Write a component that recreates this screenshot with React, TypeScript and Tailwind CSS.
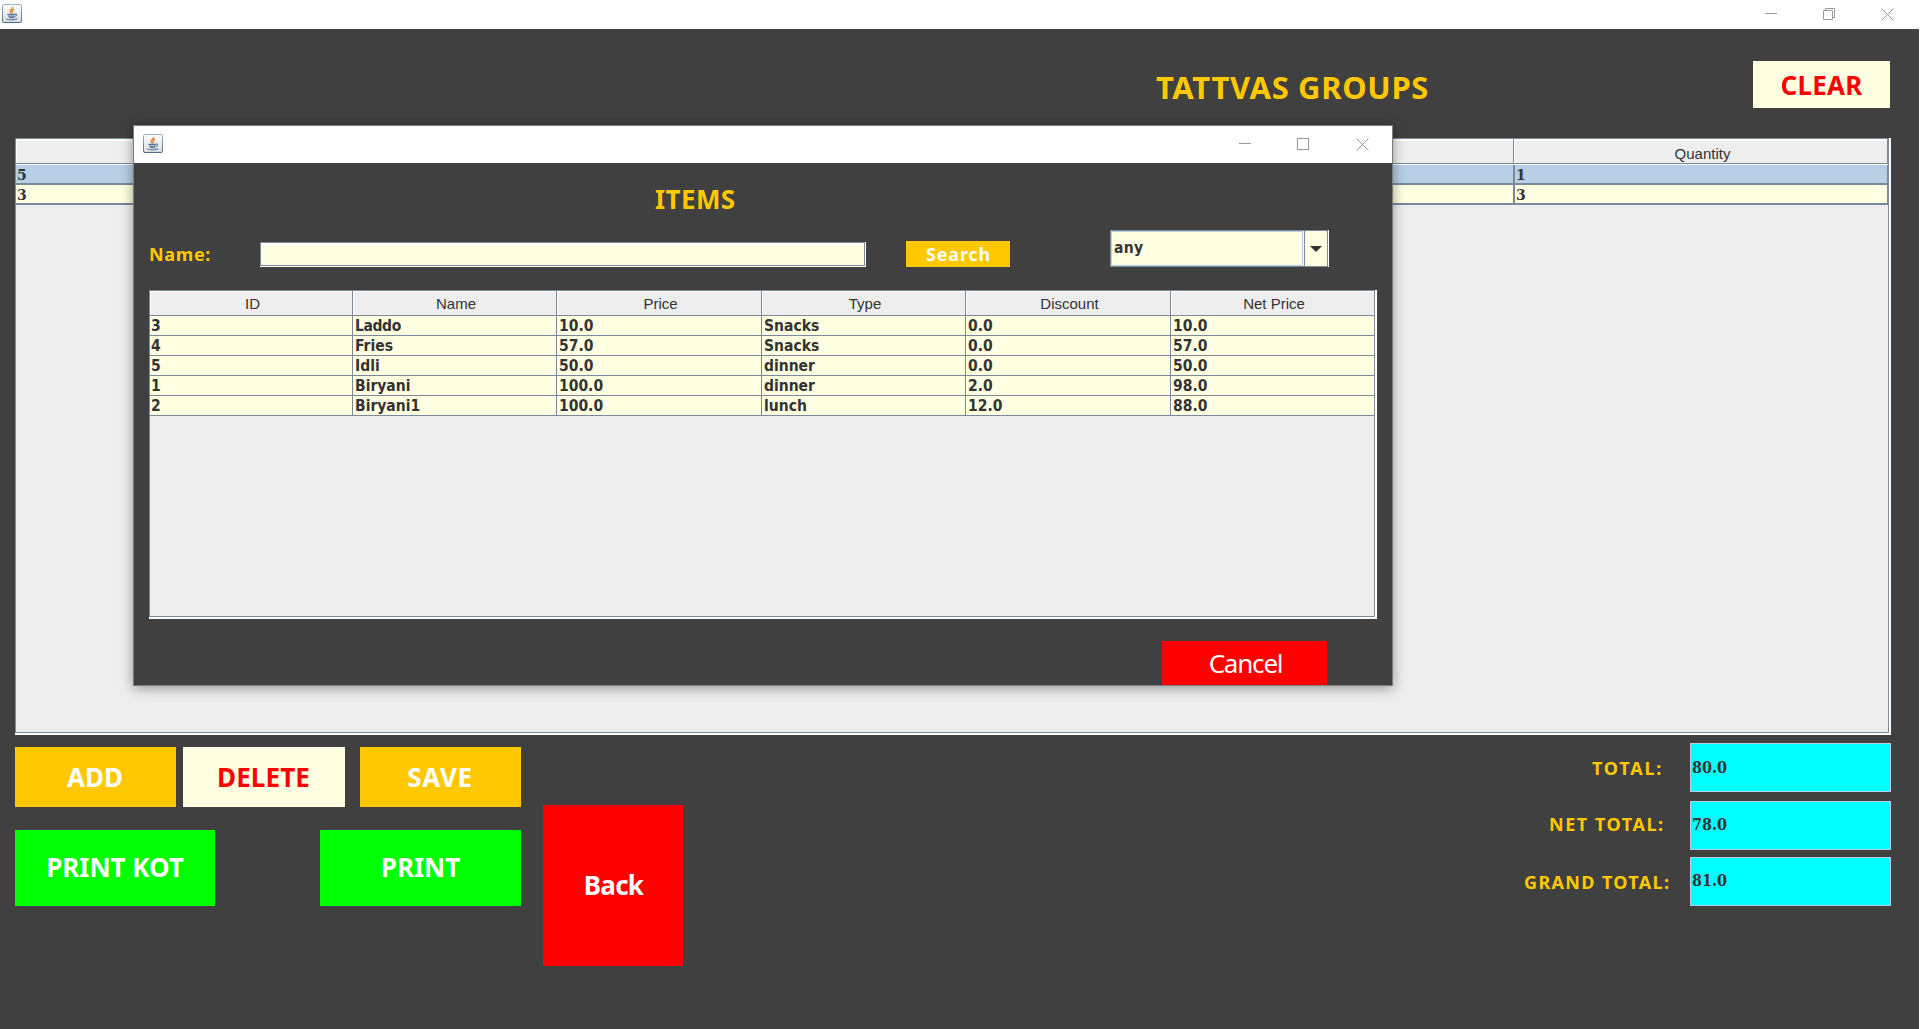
import React from "react";

type LabelProps = { cls?: string; children: React.ReactNode };

const Label = ({ cls = "", children }: LabelProps) => (
  <span className={`inline-block whitespace-nowrap ${cls}`}>{children}</span>
);

const JavaIcon = () => (
  <svg width="20" height="20" viewBox="0 0 20 20" className="shrink-0">
    <defs>
      <linearGradient id="tile" x1="0" y1="0" x2="0" y2="1">
        <stop offset="0" stopColor="#ffffff" />
        <stop offset="1" stopColor="#d9dcdf" />
      </linearGradient>
      <linearGradient id="edge" x1="0" y1="0" x2="0" y2="1">
        <stop offset="0" stopColor="#9db3c6" />
        <stop offset="1" stopColor="#4f6d86" />
      </linearGradient>
    </defs>
    <rect x="0.5" y="0.5" width="19" height="18" rx="1.5" fill="url(#tile)" stroke="url(#edge)" />
    <path d="M10.6 3c.8 1.800-2.800 2.600-2.500 4.300.2.900 1 1.200 1.300 1.900M12 5.300c-1.700.8-2.200 1.300-1.800 2.200.3.700.3 1.100-.4 1.700" fill="none" stroke="#e8883a" strokeWidth="1.500" />
    <path d="M5.200 10.300h8M6 12.100h6.500M7 13.700h5" fill="none" stroke="#5b7b97" strokeWidth="1.300" />
    <path d="M13 10c2.500-.4 2.200 2-.7 2.600M4 14.700c1.500 1.600 9.500 1.400 11.200-.2" fill="none" stroke="#6d8aa4" strokeWidth="1.200" />
  </svg>
);

const Minimise = () => (
  <svg width="13" height="13" viewBox="0 0 13 13"><path d="M0 5.500h12" stroke="#999" /></svg>
);
const Maximise = () => (
  <svg width="13" height="13" viewBox="0 0 13 13"><rect x=".5" y=".5" width="11" height="11" fill="none" stroke="#999" /></svg>
);
const Restore = () => (
  <svg width="13" height="13" viewBox="0 0 13 13"><path d="M.5 2.500h9v9h-9zM2.500 2.500v-2h9v9h-2" fill="none" stroke="#999" /></svg>
);
const Close = () => (
  <svg width="13" height="13" viewBox="0 0 13 13"><path d="M.5.5l12 12M12.500.5l-12 12" stroke="#999" /></svg>
);

const heading = "font-['Noto_Sans',sans-serif] font-bold";
const cellFont =
  "font-['DejaVu_Sans_Condensed','DejaVu_Sans',sans-serif] font-stretch-condensed font-bold text-[15.5px] text-[#333333]";
const serifCell =
  "font-['DejaVu_Serif_Condensed','DejaVu_Serif',serif] font-stretch-condensed font-bold text-[#333333]";
const headerFont = "font-['Liberation_Sans',sans-serif] text-[15px] text-[#333333]";

const columns = ["ID", "Name", "Price", "Type", "Discount", "Net Price"];
const items = [
  ["3", "Laddo", "10.0", "Snacks", "0.0", "10.0"],
  ["4", "Fries", "57.0", "Snacks", "0.0", "57.0"],
  ["5", "Idli", "50.0", "dinner", "0.0", "50.0"],
  ["1", "Biryani", "100.0", "dinner", "2.0", "98.0"],
  ["2", "Biryani1", "100.0", "lunch", "12.0", "88.0"],
];

const itemGrid = "grid grid-cols-[203px_204px_205px_204px_205px_204px]";

function ItemsTable() {
  return (
    <div className="ml-[15px] mt-[23px] h-[329px] w-[1228px] shrink-0 border-b-2 border-r-2 border-white bg-[#eeeeee]">
      <div className="h-full border border-[#7a8a99]">
        <div className={`${itemGrid} h-[25px]`}>
          {columns.map((c) => (
            <div key={c} className="h-[25px] border-b border-r border-[#7a8a99]">
              <div className={`h-full border-l border-t border-white pl-[2px] pt-px text-center leading-[22px] ${headerFont}`}>
                {c}
              </div>
            </div>
          ))}
        </div>
        {items.map((row) => (
          <div key={row[0]} className={`${itemGrid} h-5 bg-[#ffffe1]`}>
            {row.map((v, i) => (
              <div
                key={i}
                className={`h-5 border-b border-r border-[#7a8a99] leading-[20px] ${cellFont} ${i === 0 ? "pl-px" : "pl-[2px]"} ${v === "Laddo" ? "tracking-[-0.4px]" : ""}`}
              >
                {v}
              </div>
            ))}
          </div>
        ))}
      </div>
    </div>
  );
}

function ItemsDialog() {
  return (
    <div className="absolute left-[133px] top-[125px] flex h-[561px] w-[1260px] flex-col border border-[#7d7d7d] bg-[#404040] shadow-[0_2px_12px_rgba(0,0,0,0.4)]">
      <div className="flex h-[37px] shrink-0 bg-white pl-[9px]">
        <div className="pt-2"><JavaIcon /></div>
        <div className="ml-auto mr-[23px] flex pt-3">
          <Minimise />
          <div className="ml-[45px] mr-[46px]"><Maximise /></div>
          <Close />
        </div>
      </div>
      <h2 className={`ml-[521px] mt-[18px] h-[36px] text-[26px] leading-[36px] tracking-[0.4px] text-[#ffc800] ${heading}`}>
        <Label>ITEMS</Label>
      </h2>
      <div className="mt-[12px] flex h-[38px]">
        <div className={`ml-[15px] w-[111px] pt-[12px] text-[18px] leading-[26px] tracking-[0.65px] text-[#ffc800] ${heading}`}>
          <Label>Name:</Label>
        </div>
        <div className="mt-[13px] h-[25px] w-[606px] border-b border-r border-white bg-[#7a8a99] pl-px pt-px">
          <div className="h-full border-b border-r border-[#7a8a99]">
            <div className="h-full border-l border-t-2 border-white bg-[#ffffe1]" />
          </div>
        </div>
        <button className={`ml-10 mt-3 h-[26px] w-[104px] bg-[#ffc800] pl-px text-[18px] leading-[26px] tracking-[0.8px] text-white ${heading}`}>
          <Label>Search</Label>
        </button>
        <div className="ml-[100px] mt-px flex h-[37px] w-[219px] border-r border-white">
          <div className="flex flex-1 border border-[#7a8a99] bg-[#ffffe1]">
            <div className={`w-[192px] border border-[#b8cfe5] pl-[2px] leading-[33px] tracking-[0.3px] ${cellFont}`}>any</div>
            <div className="ml-px flex flex-1 items-center justify-center border-l border-[#7a8a99]">
              <svg width="12" height="6" viewBox="0 0 12 6"><path d="M0 0h12L6 6z" fill="#333" /></svg>
            </div>
          </div>
        </div>
      </div>
      <ItemsTable />
      <button className="ml-[1028px] mt-[22px] h-[44px] w-[165px] bg-[#ff0000] pl-0.5 font-['Noto_Sans',sans-serif] text-[26px] leading-[43px] tracking-[-1.2px] text-white">
        <Label>Cancel</Label>
      </button>
    </div>
  );
}

const orderRows = [
  { id: "5", quantity: "1", bg: "bg-[#b8cfe5]" },
  { id: "3", quantity: "3", bg: "bg-[#ffffe1]" },
];

function OrderTable() {
  return (
    <div className="ml-[15px] mt-[30px] h-[597px] w-[1876px] shrink-0 border-b-2 border-r-2 border-white bg-[#eeeeee]">
      <div className="h-full border border-[#7a8a99]">
        <div className="grid h-[26px] grid-cols-[1498px_1fr] border-b border-white">
          {["", "Quantity"].map((c) => (
            <div key={c} className="h-[25px] border-b border-r border-[#7a8a99]">
              <div className={`h-full border-l border-t-2 border-white pl-[3px] pt-0.5 text-center leading-[21px] ${headerFont}`}>{c}</div>
            </div>
          ))}
        </div>
        {orderRows.map((r) => (
          <div key={r.id} className={`grid h-5 grid-cols-[1499px_1fr] text-[15.5px] leading-[19px] ${serifCell} ${r.bg}`}>
            <div className="h-5 border-b-2 border-r-2 border-[#7a8a99] pl-px">{r.id}</div>
            <div className="h-5 border-b-2 border-r border-[#7a8a99] pl-px">{r.quantity}</div>
          </div>
        ))}
      </div>
    </div>
  );
}

const action = `shrink-0 text-[26px] ${heading}`;
const totalRow = `flex text-[18px] leading-[26px] text-[#ffc800] ${heading}`;
const totalField = `h-[49px] w-[201px] border border-[#b8cfe5] bg-[#00ffff] pl-px text-[16px] ${serifCell}`;

export default function App() {
  return (
    <div className="relative flex h-[1029px] w-[1920px] flex-col overflow-hidden bg-[#404040]">
      <div className="flex h-[29px] shrink-0 bg-white pl-[2px]">
        <div className="pt-1"><JavaIcon /></div>
        <div className="ml-auto mr-[26px] flex gap-[45px] pt-2">
          <Minimise />
          <Restore />
          <Close />
        </div>
      </div>
      <div className="flex h-[1000px] flex-col border-r border-white">
        <header className="flex h-[79px] shrink-0">
          <h1 className={`ml-[1156px] w-[597px] pt-[37px] text-[31px] leading-[42px] tracking-[0.65px] text-[#ffc800] ${heading}`}>
            <Label>TATTVAS GROUPS</Label>
          </h1>
          <button className={`mt-8 h-[47px] w-[137px] bg-[#ffffe1] pt-px leading-[46px] tracking-[0.2px] text-[#ff0000] ${action}`}>
            <Label>CLEAR</Label>
          </button>
        </header>
        <OrderTable />
        <div className="flex">
          <div className="ml-[15px] mt-3 w-[506px]">
            <div className="flex">
              <button className={`h-[60px] w-[161px] bg-[#ffc800] pr-px text-white ${action}`}><Label>ADD</Label></button>
              <button className={`ml-[7px] h-[60px] w-[162px] bg-[#ffffe1] pr-px tracking-[0.1px] text-[#ff0000] ${action}`}><Label>DELETE</Label></button>
              <button className={`ml-[15px] h-[60px] w-[161px] bg-[#ffc800] pr-px tracking-[0.7px] text-white ${action}`}><Label>SAVE</Label></button>
            </div>
            <div className="mt-[23px] flex justify-between">
              <button className={`h-[76px] w-[200px] bg-[#00ff00] pb-px text-white ${action}`}><Label>PRINT KOT</Label></button>
              <button className={`h-[76px] w-[201px] bg-[#00ff00] pb-px text-white ${action}`}><Label>PRINT</Label></button>
            </div>
          </div>
          <button className={`ml-[22px] mt-[70px] h-[161px] w-[140px] bg-[#ff0000] pl-px tracking-[-0.7px] text-white ${action}`}><Label>Back</Label></button>
          <div className="ml-auto w-[395px] pt-2">
            <div className={totalRow}>
              <div className="w-[166px] pl-[68px] pt-[12px] tracking-[1.8px]"><Label>TOTAL:</Label></div>
              <div className={`leading-[47px] ${totalField}`}>80.0</div>
            </div>
            <div className={`mt-[9px] ${totalRow}`}>
              <div className="w-[166px] pl-[25px] pt-[10px] tracking-[1.55px]"><Label>NET TOTAL:</Label></div>
              <div className={`leading-[46px] ${totalField}`}>78.0</div>
            </div>
            <div className={`mt-[7px] ${totalRow}`}>
              <div className="w-[166px] pt-[12px] tracking-[1.35px]"><Label>GRAND TOTAL:</Label></div>
              <div className={`leading-[46px] ${totalField}`}>81.0</div>
            </div>
          </div>
        </div>
      </div>
      <ItemsDialog />
    </div>
  );
}
